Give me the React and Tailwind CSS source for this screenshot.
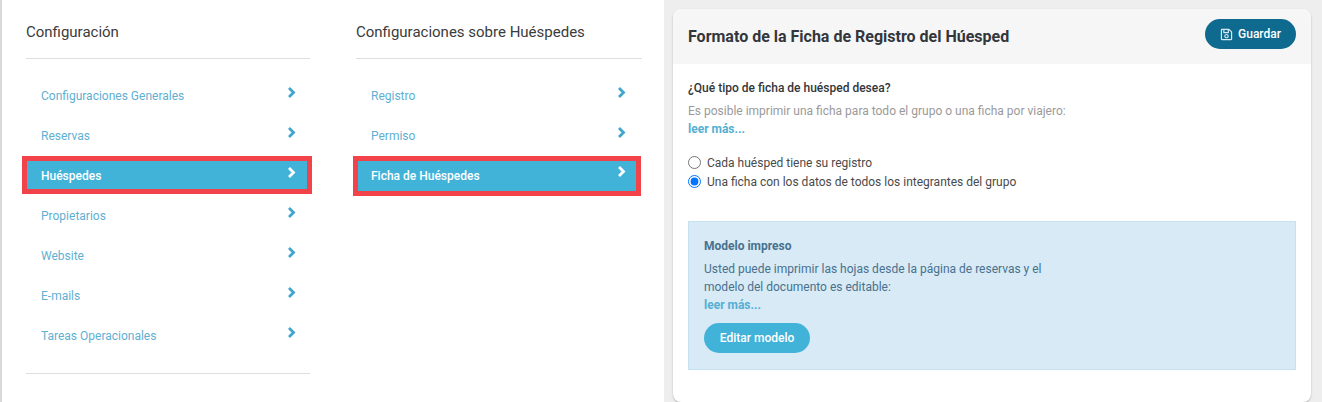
import React from 'react';
import { FaRegSave } from 'react-icons/fa';

const MAIN_ITEMS = [
  'Configuraciones Generales',
  'Reservas',
  'Huéspedes',
  'Propietarios',
  'Website',
  'E-mails',
  'Tareas Operacionales',
];

const GUEST_ITEMS = ['Registro', 'Permiso', 'Ficha de Huéspedes'];

function Chevron({ className }) {
  return (
    <svg width="9" height="11" viewBox="0 0 9 11" fill="none" className={className}>
      <path d="M2 1 L6.5 5.5 L2 10" stroke="currentColor" strokeWidth="2.8" />
    </svg>
  );
}

function MenuItem({ label, active, second }) {
  const spacing = second ? 'ml-[2px] mr-[6px] pl-[13px] pr-[10px]' : 'ml-px mr-[3px] pl-[14px] pr-[11px]';
  const height = second && active ? 'h-[30px] mt-px' : 'h-[28px]';
  return (
    <div
      className={`flex justify-between mb-[12px] ${spacing} ${height} ${
        active
          ? 'bg-[#41b3d9] text-white font-medium outline-[5px] outline-[#f2424a]'
          : 'text-[#5fafd2]'
      }`}
    >
      <span className="text-[12px] leading-[28px] pt-px">{label}</span>
      <Chevron className={`${second && active ? 'mt-[5px]' : 'mt-[6px]'} ${active ? 'text-white' : 'text-[#41a5cc]'}`} />
    </div>
  );
}

function MenuColumn({ title, items, activeItem, second, className, children }) {
  return (
    <div className={className}>
      <h2 className="text-[15px] leading-[20px] pt-[22px] pb-[16px] border-b border-[#dedede] text-[#3b3b3b]">
        {title}
      </h2>
      <div className="pt-[22px]">
        {items.map(item => (
          <MenuItem key={item} label={item} active={item === activeItem} second={second} />
        ))}
      </div>
      {children}
    </div>
  );
}

export default function App() {
  return (
    <div className="flex h-[402px] w-[1322px] overflow-hidden bg-white font-['Roboto',sans-serif] border-l-[2px] border-[#d9d9d9]">
      <MenuColumn
        title="Configuración"
        items={MAIN_ITEMS}
        activeItem="Huéspedes"
        className="w-[284px] ml-[24px] shrink-0"
      >
        <div className="mt-[24px] border-b border-[#dedede]" />
      </MenuColumn>

      <MenuColumn
        title="Configuraciones sobre Huéspedes"
        items={GUEST_ITEMS}
        activeItem="Ficha de Huéspedes"
        second
        className="w-[286px] ml-[46px] shrink-0"
      />

      <div className="ml-[22px] flex-1 bg-[#eeeeee] pt-[9px] pl-[9px] pr-[11px]">
        <div className="h-[393px] rounded-[8px] bg-white shadow-[0_1px_2px_rgba(0,0,0,0.25)] overflow-hidden">
          <div className="flex h-[55px] items-center justify-between bg-[#f6f6f7] pl-[15px] pr-[15px]">
            <h1 className="text-[16px] font-bold text-[#33363b]">Formato de la Ficha de Registro del Húesped</h1>
            <button className="mt-[-5px] flex h-[30px] w-[91px] items-center justify-center gap-[5px] rounded-full bg-[#0e6a8f] text-[12px] font-medium text-white">
              <FaRegSave className="text-[13px] text-[#d5e8f0]" />
              Guardar
            </button>
          </div>

          <div className="px-[15px] pt-[15px]">
            <p className="text-[12px] leading-[18px] font-medium text-[#33363b]">¿Qué tipo de ficha de huésped desea?</p>
            <p className="mt-[5px] text-[12px] leading-[18px] text-[#9a9a9a]">
              Es posible imprimir una ficha para todo el grupo o una ficha por viajero:
            </p>
            <p className="text-[12px] leading-[18px] font-bold text-[#54afd3]">leer más...</p>

            <label className="mt-[15px] flex h-[19px] items-center text-[12px] text-[#4a4a4a]">
              <input type="radio" name="ficha" readOnly className="m-0 mr-[6px] size-[13px]" />
              Cada huésped tiene su registro
            </label>
            <label className="flex h-[19px] items-center text-[12px] text-[#4a4a4a]">
              <input type="radio" name="ficha" readOnly defaultChecked className="m-0 mr-[6px] size-[13px]" />
              Una ficha con los datos de todos los integrantes del grupo
            </label>

            <div className="mt-[30px] h-[149px] border border-[#c4e2ef] bg-[#d8eaf5] px-[15px] pt-[15px] text-[#47718f]">
              <p className="text-[12px] leading-[18px] font-bold">Modelo impreso</p>
              <p className="mt-[5px] w-[350px] text-[12px] leading-[18px]">
                Usted puede imprimir las hojas desde la página de reservas y el modelo del documento es editable:
              </p>
              <p className="text-[12px] leading-[18px] font-bold text-[#54afd3]">leer más...</p>
              <button className="mt-[9px] h-[30px] w-[106px] rounded-full bg-[#41b3d9] text-[12px] font-medium text-white">
                Editar modelo
              </button>
            </div>
          </div>
        </div>
      </div>
    </div>
  );
}
